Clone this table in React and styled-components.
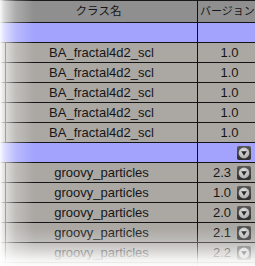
import React from 'react';
import styled, { createGlobalStyle } from 'styled-components';

const GlobalStyle = createGlobalStyle`
    html, body {
        margin: 0;
        padding: 0;
        background: #ffffff;
    }
    body {
        font-family: "Liberation Sans", "Noto Sans CJK JP", sans-serif;
        color: #161616;
    }
`;

const classes = [
    { name: 'BA_fractal4d2_scl', version: '1.0', menu: false },
    { name: 'BA_fractal4d2_scl', version: '1.0', menu: false },
    { name: 'BA_fractal4d2_scl', version: '1.0', menu: false },
    { name: 'BA_fractal4d2_scl', version: '1.0', menu: false },
    { name: 'BA_fractal4d2_scl', version: '1.0', menu: false },
    { group: true },
    { name: 'groovy_particles', version: '2.3', menu: true },
    { name: 'groovy_particles', version: '1.0', menu: true },
    { name: 'groovy_particles', version: '2.0', menu: true },
    { name: 'groovy_particles', version: '2.1', menu: true },
    { name: 'groovy_particles', version: '2.2', menu: true },
];

const DropIcon = () => (
    <svg width="14" height="14" viewBox="0 0 14 14">
        <defs>
            <linearGradient id="dropBox" x1="0" y1="0" x2="0" y2="1">
                <stop offset="0" stopColor="#5a5a5a" />
                <stop offset="1" stopColor="#2c2c2c" />
            </linearGradient>
            <radialGradient id="dropKnob" cx="0.45" cy="0.35" r="0.7">
                <stop offset="0" stopColor="#e4e4e4" />
                <stop offset="1" stopColor="#a8a8a8" />
            </radialGradient>
        </defs>
        <rect x="0" y="0" width="14" height="14" rx="2" fill="url(#dropBox)" />
        <circle cx="7" cy="7" r="5.4" fill="url(#dropKnob)" />
        <path d="M4.2 5.2 L9.8 5.2 L7 9.7 Z" fill="#262626" />
    </svg>
);

const App = () => {
    return (
        <>
            <GlobalStyle />
            <Frame>
                <Table>
                    <HeaderRow>
                        <HeadName>クラス名</HeadName>
                        <HeadVersion>バージョン</HeadVersion>
                    </HeaderRow>
                    <GroupRow>
                        <NameCell />
                        <VersionCell />
                    </GroupRow>
                    {classes.map((item, i) =>
                        item.group ? (
                            <GroupRow key={i}>
                                <NameCell />
                                <VersionCell $menu>
                                    <DropIcon />
                                </VersionCell>
                            </GroupRow>
                        ) : (
                            <DataRow key={i}>
                                <Gutter />
                                <NameCell>{item.name}</NameCell>
                                <VersionCell $menu={item.menu}>
                                    <span>{item.version}</span>
                                    {item.menu && <DropIcon />}
                                </VersionCell>
                            </DataRow>
                        )
                    )}
                    <DataRow>
                        <Gutter />
                        <NameCell />
                        <VersionCell />
                    </DataRow>
                </Table>
                <SideFade />
                <BottomFade />
            </Frame>
        </>
    );
};

const Frame = styled.div`
    position: relative;
    width: 255px;
    height: 266px;
    overflow: hidden;
`;

const Table = styled.div`
    display: flex;
    flex-direction: column;
    width: 261px;
    border-top: 1px solid #1a1a1a;
    font-size: 13px;
`;

const Row = styled.div`
    display: grid;
    grid-template-columns: 198px 63px;
    height: 20px;
    box-sizing: border-box;
    border-bottom: 1px solid #141414;
    line-height: 19px;
`;

const HeaderRow = styled(Row)`
    height: 22px;
    background: #8f8f8f;
    line-height: 21px;
    font-size: 11px;
`;

const GroupRow = styled(Row)`
    background: #a3a3fd;
`;

const DataRow = styled(Row)`
    grid-template-columns: 6px 192px 63px;
    background: #aba8a4;
`;

const Gutter = styled.div`
    border-right: 1px solid #111;
`;

const NameCell = styled.div`
    border-right: 1px solid #111;
    text-align: center;
    white-space: nowrap;
    overflow: hidden;
`;

const HeadName = styled(NameCell)`
    font-size: 11.5px;
`;

/* plain versions sit centred; versions with a picker line up left of it */
const VersionCell = styled.div`
    display: flex;
    align-items: center;
    justify-content: ${(p) => (p.$menu ? 'flex-end' : 'center')};
    gap: 6px;
    padding-right: ${(p) => (p.$menu ? '10px' : '0')};
    white-space: nowrap;

    svg {
        display: block;
        flex: none;
    }
`;

const HeadVersion = styled.div`
    padding-left: 2px;
    white-space: nowrap;
    overflow: hidden;
`;

const SideFade = styled.div`
    position: absolute;
    top: 0;
    left: 0;
    bottom: 0;
    width: 36px;
    pointer-events: none;
    background: linear-gradient(
        to right,
        rgba(255, 255, 255, 0.95) 0px,
        rgba(255, 255, 255, 0.62) 5px,
        rgba(255, 255, 255, 0.25) 16px,
        rgba(255, 255, 255, 0) 34px
    );
`;

const BottomFade = styled.div`
    position: absolute;
    left: 0;
    right: 0;
    bottom: 0;
    height: 38px;
    pointer-events: none;
    background: linear-gradient(
        to bottom,
        rgba(255, 255, 255, 0) 0px,
        rgba(255, 255, 255, 0.2) 12px,
        rgba(255, 255, 255, 0.5) 22px,
        rgba(255, 255, 255, 0.88) 32px,
        rgba(255, 255, 255, 0.96) 38px
    );
`;

export default App;
